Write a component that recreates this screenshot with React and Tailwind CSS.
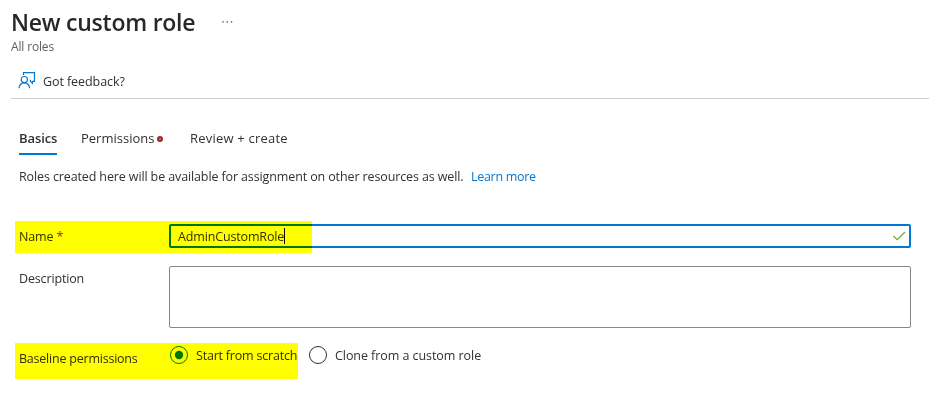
function Radio({ checked, label, className }) {
  return (
    <label className="flex h-5 items-center">
      <svg width="20" height="20" viewBox="0 0 20 20" className="shrink-0">
        <circle cx="10" cy="10" r="8.5" fill="#fff" stroke={checked ? '#0078d4' : '#323130'} strokeWidth="1" />
        {checked && <circle cx="10" cy="10" r="4.2" fill="#0078d4" />}
      </svg>
      <span className={`ml-[7px] mt-[2px] whitespace-nowrap ${className}`}>{label}</span>
    </label>
  );
}

function FeedbackIcon() {
  return (
    <svg width="18" height="18" viewBox="0 0 18 18" fill="none" stroke="#0078d4" strokeWidth="1.2">
      <path d="M5.500 3V.6h11v8.700h-2.100v2l-2-2v-1.500" />
      <circle cx="6.300" cy="7.600" r="3.100" />
      <path d="M1 16.200c.3-3.200 2.300-5.400 5.300-5.400s5 2.200 5.300 5.400" />
    </svg>
  );
}

export default function App() {
  return (
    <main className="relative h-[414px] w-[929px] overflow-hidden bg-white font-['Segoe_UI','Open_Sans','Noto_Sans',sans-serif] text-[12.5px] leading-5 text-[#323130]">
      <header className="ml-[11px] border-b border-[#d2d0ce] pb-[7px]">
        <div className="flex h-9 items-center pt-2">
          <h1 className="w-[211px] whitespace-nowrap text-[23px] font-semibold leading-7 tracking-[-0.24px] text-[#292827]">New custom role</h1>
          <svg width="12" height="2" viewBox="0 0 12 2" fill="#797775">
            <rect x="0.300" y="0" width="1.400" height="1.700" />
            <rect x="4.500" y="0" width="1.400" height="1.700" />
            <rect x="8.800" y="0" width="1.400" height="1.700" />
          </svg>
        </div>
        <p className="h-5 pt-px text-[12px] tracking-[-0.15px] text-[#605e5c]">All roles</p>
        <div className="mt-[15px] flex h-5 items-center pl-[7px]">
          <FeedbackIcon />
          <span className="ml-[7px] mt-[2px] tracking-[-0.08px]">Got feedback?</span>
        </div>
      </header>

      <nav className="mt-[29px] flex h-[27px] pl-[19px] text-[13px]">
        <span className="h-[27px] w-[38px] whitespace-nowrap border-b-2 border-[#0078d4] font-semibold tracking-[-0.1px]">Basics</span>
        <span className="ml-6 flex h-5 w-[109px] items-center">
          Permissions
          <svg width="6" height="6" viewBox="0 0 6 6" className="ml-[3px] mt-[2px]">
            <circle cx="3" cy="3" r="3" fill="#a4262c" />
            <rect x="2.500" y="2" width="1" height="2" fill="#d8a0a3" />
          </svg>
        </span>
        <span className="whitespace-nowrap tracking-[0.21px]">Review + create</span>
      </nav>

      <p className="mt-[12px] flex h-5 whitespace-nowrap pl-[19px]">
        <span className="w-[452px] tracking-[-0.12px]">Roles created here will be available for assignment on other resources as well.</span>
        <a className="tracking-[-0.3px] text-[#0078d4]">Learn more</a>
      </p>

      <form className="mt-[37px] pl-[19px]">
        <div className="flex h-6 items-center">
          <label className="mt-[2px] w-[150px] tracking-[-0.15px]">Name <span className="text-[#a4262c]">*</span></label>
          <div className="flex h-6 w-[742px] items-center rounded-[2px] border-2 border-[#0078d4] pl-[7px] pr-[3px]">
            <span className="mt-[2px] tracking-[-0.15px]">AdminCustomRole</span>
            <span className="h-4 w-px bg-black" />
            <svg width="14" height="12" viewBox="0 0 14 12" className="ml-auto" fill="none" stroke="#6bb030" strokeWidth="1.300">
              <path d="M1.500 6l3.700 3.700L13 2" />
            </svg>
          </div>
        </div>
        <div className="mt-[18px] flex h-[62px]">
          <label className="w-[150px] pt-[3px] tracking-[-0.15px]">Description</label>
          <div className="h-[62px] w-[742px] rounded-[2px] border border-[#8a8886]" />
        </div>
        <div className="mt-[17px] flex h-5">
          <label className="w-[150px] whitespace-nowrap pt-[4px] tracking-[-0.22px]">Baseline permissions</label>
          <div className="flex">
            <div className="w-[139px]"><Radio checked label="Start from scratch" className="tracking-[-0.2px]" /></div>
            <Radio label="Clone from a custom role" className="tracking-[-0.06px]" />
          </div>
        </div>
      </form>

      {/* Highlighter marks over the form */}
      <div className="absolute left-[15px] top-[221px] h-8 w-[297px] bg-[#ffff00] mix-blend-multiply" />
      <div className="absolute left-[15px] top-[343px] h-9 w-[283px] bg-[#ffff00] mix-blend-multiply" />
    </main>
  );
}
